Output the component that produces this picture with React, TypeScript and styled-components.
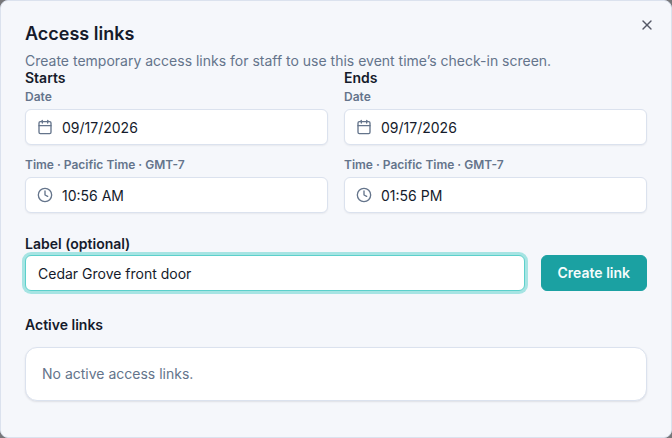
import React, { useState } from "react";
import styled, { createGlobalStyle, css } from "styled-components";
import { Calendar, Clock, X } from "lucide-react";

const GlobalStyle = createGlobalStyle`
  *, *::before, *::after { box-sizing: border-box; }
  body {
    margin: 0;
    background: #77777a;
    color: #151b2b;
    font-family: Inter, "Liberation Sans", sans-serif;
    font-size: 14px;
    line-height: 20px;
  }
  h2, h3, p, fieldset, legend { margin: 0; padding: 0; border: 0; }
  button, input { font: inherit; color: inherit; }
`;

const Dialog = styled.section`
  position: relative;
  min-height: 100vh;
  padding: 24px 24px 36px;
  border: 1px solid #dbe2ee;
  border-radius: 8px;
  background: #f5f7fb;
`;

const CloseButton = styled.button`
  position: absolute;
  top: 16px;
  right: 16px;
  display: flex;
  padding: 0;
  border: 0;
  background: transparent;
  color: #555866;
  cursor: pointer;
`;

const Title = styled.h2`
  margin-bottom: 8px;
  font-size: 18px;
  font-weight: 600;
  line-height: 18px;
`;

const Description = styled.p`
  color: #64748b;
`;

const Form = styled.form`
  display: flex;
  flex-direction: column;
  gap: 24px;
`;

const Schedule = styled.div`
  display: grid;
  grid-template-columns: 1fr 1fr;
  gap: 16px;
`;

const Moment = styled.fieldset`
  min-width: 0;
`;

const Legend = styled.legend`
  margin-bottom: 4px;
  font-weight: 600;
  line-height: 14px;
`;

const Fields = styled.div`
  display: flex;
  flex-direction: column;
  gap: 12px;
`;

const Field = styled.div`
  display: flex;
  flex-direction: column;
  gap: 4px;
  flex: 1;
  min-width: 0;
`;

const FieldLabel = styled.label<{ $strong?: boolean }>`
  font-size: ${(p) => (p.$strong ? "14px" : "12px")};
  line-height: ${(p) => (p.$strong ? "14px" : "16px")};
  font-weight: 600;
  color: ${(p) => (p.$strong ? "inherit" : "#64748b")};
`;

const InputFrame = styled.div<{ $active?: boolean }>`
  display: flex;
  align-items: center;
  gap: 9px;
  height: 36px;
  padding: 0 ${(p) => (p.$active ? "12px" : "11px")};
  border: 1px solid #dbe2ee;
  border-radius: 6px;
  background: #fff;
  box-shadow: 0 1px 2px rgba(15, 23, 42, 0.06);
  color: #64748b;

  svg {
    flex: none;
  }

  ${(p) =>
    p.$active &&
    css`
      border-color: #5cd0cb;
      box-shadow: 0 0 0 3px #a6e4e3;
    `}
`;

const TextInput = styled.input`
  flex: 1;
  min-width: 0;
  height: 21px;
  padding: 1px 0 0;
  border: 0;
  outline: 0;
  background: transparent;
  color: #151b2b;
  line-height: 20px;
`;

const CreateRow = styled.div`
  display: flex;
  align-items: flex-end;
  gap: 16px;
`;

const PrimaryButton = styled.button`
  height: 36px;
  padding: 0 16px;
  border: 1px solid #1ba1a2;
  border-radius: 6px;
  background: #1ba1a2;
  color: #f5fcfc;
  font-weight: 600;
  cursor: pointer;
`;

const ActiveLinks = styled.section`
  display: flex;
  flex-direction: column;
  gap: 12px;
  margin-top: 24px;
`;

const SectionTitle = styled.h3`
  font-size: 14px;
  font-weight: 600;
`;

const EmptyCard = styled.div`
  padding: 16px;
  border: 1px solid #dbe2ee;
  border-radius: 12px;
  background: #fff;
  box-shadow: 0 1px 2px rgba(15, 23, 42, 0.1);
  color: #64748b;
`;

type MomentFieldsProps = { name: string; date: string; time: string };

function MomentFields({ name, date, time }: MomentFieldsProps) {
  const id = name.toLowerCase();
  return (
    <Moment>
      <Legend>{name}</Legend>
      <Fields>
        <Field>
          <FieldLabel htmlFor={`${id}-date`}>Date</FieldLabel>
          <InputFrame>
            <Calendar size={16} aria-hidden />
            <TextInput id={`${id}-date`} defaultValue={date} />
          </InputFrame>
        </Field>
        <Field>
          <FieldLabel htmlFor={`${id}-time`}>Time · Pacific Time · GMT-7</FieldLabel>
          <InputFrame>
            <Clock size={16} aria-hidden />
            <TextInput id={`${id}-time`} defaultValue={time} />
          </InputFrame>
        </Field>
      </Fields>
    </Moment>
  );
}

export default function App() {
  const [label, setLabel] = useState("Cedar Grove front door");
  return (
    <>
      <GlobalStyle />
      <Dialog role="dialog" aria-labelledby="dialog-title" aria-describedby="dialog-text">
        <Title id="dialog-title">Access links</Title>
        <Description id="dialog-text">
          Create temporary access links for staff to use this event time’s check-in screen.
        </Description>
        <Form onSubmit={(e) => e.preventDefault()}>
          <Schedule>
            <MomentFields name="Starts" date="09/17/2026" time="10:56 AM" />
            <MomentFields name="Ends" date="09/17/2026" time="01:56 PM" />
          </Schedule>
          <CreateRow>
            <Field>
              <FieldLabel $strong htmlFor="link-label">Label (optional)</FieldLabel>
              <InputFrame $active>
                <TextInput id="link-label" value={label} onChange={(e) => setLabel(e.target.value)} />
              </InputFrame>
            </Field>
            <PrimaryButton type="submit">Create link</PrimaryButton>
          </CreateRow>
        </Form>
        <ActiveLinks>
          <SectionTitle>Active links</SectionTitle>
          <EmptyCard>No active access links.</EmptyCard>
        </ActiveLinks>
        <CloseButton type="button" aria-label="Close">
          <X size={16} aria-hidden />
        </CloseButton>
      </Dialog>
    </>
  );
}
